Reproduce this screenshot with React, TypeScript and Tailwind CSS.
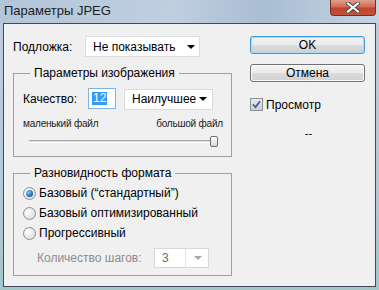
import React from 'react';

const font = { fontFamily: '"Liberation Sans", Arial, sans-serif' };

function Arrow({ disabled = false }: { disabled?: boolean }) {
  return (
    <svg width="8" height="4" viewBox="0 0 8 4" className="shrink-0">
      <path d="M0 0h8L4 4z" fill={disabled ? '#a8a8a8' : '#000'} />
    </svg>
  );
}

function Select({ value, className = '', disabled = false }: { value: string; className?: string; disabled?: boolean }) {
  return (
    <div
      className={`flex items-center justify-between bg-white border ${
        disabled ? 'border-[#d9d9d9] text-[#6d6d6d]' : 'border-[#dcdcdc] text-black'
      } ${className}`}
    >
      <span className="leading-none">{value}</span>
      {disabled ? (
        <div className="flex items-center h-full border-l border-[#e4e4e4] pl-[8px] pr-[6px]">
          <Arrow disabled />
        </div>
      ) : (
        <Arrow />
      )}
    </div>
  );
}

function Button({ label, focused = false }: { label: string; focused?: boolean }) {
  return (
    <div
      className={`h-[18px] w-[115px] flex items-center justify-center rounded-[3px] border text-[12px] leading-none text-black bg-[linear-gradient(to_bottom,#f3f3f3_0%,#ebebeb_48%,#dddddd_52%,#cfcfcf_100%)] ${
        focused
          ? 'border-[#3c9bd8] shadow-[inset_0_0_0_1px_#a8dcf5]'
          : 'border-[#707070] shadow-[inset_0_0_0_1px_#fcfcfc]'
      }`}
    >
      {label}
    </div>
  );
}

function Radio({ checked = false }: { checked?: boolean }) {
  return (
    <div className="w-[13px] h-[13px] rounded-full border border-[#8e8f8f] bg-[radial-gradient(circle_at_35%_35%,#ffffff,#d4d4d4)] flex items-center justify-center shrink-0">
      {checked && (
        <div className="w-[7px] h-[7px] rounded-full bg-[radial-gradient(circle_at_35%_35%,#8cc4ee,#1c5fa8_70%)]" />
      )}
    </div>
  );
}

function Group({ title, className = '', children }: { title: string; className?: string; children: React.ReactNode }) {
  return (
    <div className={`relative border border-[#a0a0a0] ${className}`}>
      <span className="absolute -top-[8px] left-[16px] bg-[#f0f0f0] px-[4px] text-[12px] leading-[14px] text-black">
        {title}
      </span>
      {children}
    </div>
  );
}

export default function App() {
  return (
    <div
      className="w-[379px] h-[290px] flex flex-col bg-[linear-gradient(to_bottom,#bccbdc_0%,#b6c9d8_60%,#a3c6c9_100%)] overflow-hidden"
      style={font}
    >
      {/* Title bar */}
      <div className="h-[23px] flex items-start shrink-0 bg-[linear-gradient(100deg,#b3c5d9_0%,#bfcfe0_45%,#a9bdd3_70%,#c6d5e4_100%)]">
        <span className="ml-[4px] mt-[3px] text-[13px] leading-[15px] text-[#1c1c1c]">Параметры JPEG</span>
        <div className="ml-auto mr-[3px] w-[46px] h-[16px] rounded-b-[4px] border border-t-0 border-[#6e3024] bg-[linear-gradient(to_bottom,#e0a090_0%,#d26a55_45%,#c0432b_55%,#c8533a_100%)] flex items-center justify-center">
          <svg width="14" height="11" viewBox="0 0 14 11">
            <path d="M2 1.5L12 9.5M12 1.5L2 9.5" stroke="#4a4a4a" strokeWidth="4" strokeLinecap="square" />
            <path d="M2 1.5L12 9.5M12 1.5L2 9.5" stroke="#ffffff" strokeWidth="2" strokeLinecap="square" />
          </svg>
        </div>
      </div>

      {/* Client area */}
      <div className="flex-1 mx-[3px] mb-[3px] border border-[#3f4a56] bg-[#f0f0f0] flex pt-[12px] pl-[9px] text-[12px] text-black">
        {/* Left column */}
        <div className="w-[219px] flex flex-col">
          <div className="flex items-center h-[21px]">
            <span className="w-[72px]">Подложка:</span>
            <Select value="Не показывать" className="w-[115px] h-[21px] pl-[7px] pr-[4px]" />
          </div>

          <Group title="Параметры изображения" className="mt-[16px] h-[84px] pt-[14px] pl-[9px] pr-[8px]">
            <div className="flex items-center h-[21px]">
              <span className="w-[65px]">Качество:</span>
              <div className="w-[28px] h-[21px] bg-white border border-[#7fb4e0] flex items-center pl-[3px]">
                <span className="bg-[#3399ff] text-white leading-[13px] px-[1px]">12</span>
              </div>
              <Select value="Наилучшее" className="ml-[8px] w-[89px] h-[21px] pl-[7px] pr-[5px] mt-[1px]" />
            </div>
            <div className="flex justify-between mt-[9px] text-[10px] leading-[12px] text-[#1a1a1a] tracking-[-0.2px]">
              <span>маленький файл</span>
              <span>большой файл</span>
            </div>
            <div className="flex items-center h-[12px] mt-[5px] pl-[6px] pr-[5px]">
              <div className="flex-1 h-[3px] border-t border-[#a8a8a8] border-b border-b-white bg-[#dcdcdc]" />
              <div className="w-[8px] h-[11px] -ml-[2px] rounded-[2px] border border-[#707070] bg-[linear-gradient(to_bottom,#ffffff,#d8d8d8)]" />
            </div>
          </Group>

          <Group title="Разновидность формата" className="mt-[16px] h-[103px] pt-[9px] pl-[9px]">
            {['Базовый (“стандартный”)', 'Базовый оптимизированный', 'Прогрессивный'].map((t, i) => (
              <div key={t} className="flex items-center h-[20px] gap-[3px]">
                <Radio checked={i === 0} />
                <span>{t}</span>
              </div>
            ))}
            <div className="flex items-center mt-[5px] pl-[14px]">
              <span className="w-[117px] text-[#8d8d8d]">Количество шагов:</span>
              <Select value="3" disabled className="w-[55px] h-[20px] pl-[7px]" />
            </div>
          </Group>
        </div>

        {/* Right column */}
        <div className="ml-[18px] w-[115px] flex flex-col">
          <Button label="OK" focused />
          <div className="mt-[10px]">
            <Button label="Отмена" />
          </div>
          <div className="flex items-center gap-[3px] mt-[16px] h-[13px]">
            <div className="w-[13px] h-[13px] border border-[#8e8f8f] bg-[linear-gradient(to_bottom,#e6e9ef,#c9d0da)] flex items-center justify-center">
              <svg width="9" height="9" viewBox="0 0 9 9">
                <path d="M1 4.5L3.5 7.2L8 1.3" stroke="#3a5a9a" strokeWidth="1.8" fill="none" />
              </svg>
            </div>
            <span>Просмотр</span>
          </div>
          <div className="mt-[16px] text-center text-[11px] leading-[12px] pl-[2px]">--</div>
        </div>
      </div>
    </div>
  );
}
